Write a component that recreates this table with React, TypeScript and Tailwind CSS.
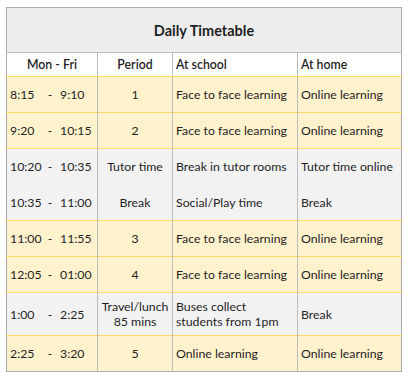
import React from 'react';

type Row = {
  from: string;
  to: string;
  period: React.ReactNode;
  school: React.ReactNode;
  home: string;
  tone: 'yellow' | 'gray';
  h: string;
  noTop?: boolean;
};

const rows: Row[] = [
  { from: '8:15', to: '9:10', period: '1', school: 'Face to face learning', home: 'Online learning', tone: 'yellow', h: 'h-[36px]' },
  { from: '9:20', to: '10:15', period: '2', school: 'Face to face learning', home: 'Online learning', tone: 'yellow', h: 'h-[36px]' },
  { from: '10:20', to: '10:35', period: 'Tutor time', school: 'Break in tutor rooms', home: 'Tutor time online', tone: 'gray', h: 'h-[36px]' },
  { from: '10:35', to: '11:00', period: 'Break', school: 'Social/Play time', home: 'Break', tone: 'gray', h: 'h-[36px]', noTop: true },
  { from: '11:00', to: '11:55', period: '3', school: 'Face to face learning', home: 'Online learning', tone: 'yellow', h: 'h-[36px]' },
  { from: '12:05', to: '01:00', period: '4', school: 'Face to face learning', home: 'Online learning', tone: 'yellow', h: 'h-[36px]' },
  {
    from: '1:00', to: '2:25',
    period: <>Travel/lunch<br />85 mins</>,
    school: <>Buses collect<br />students from 1pm</>,
    home: 'Break', tone: 'gray', h: 'h-[43px]',
  },
  { from: '2:25', to: '3:20', period: '5', school: 'Online learning', home: 'Online learning', tone: 'yellow', h: 'h-[36px]' },
];

export default function App() {
  return (
    <div className="bg-white w-[410px] h-[386px] pt-[7px] pl-[6px] text-[#1f1f1f]" style={{ fontFamily: 'Lato, "Open Sans", sans-serif' }}>
      <table className="border-collapse table-fixed w-[395px] text-[12.3px] leading-[15px] border border-[#ababab]">
        <colgroup>
          <col className="w-[91px]" />
          <col className="w-[75px]" />
          <col className="w-[125px]" />
          <col className="w-[104px]" />
        </colgroup>
        <thead>
          <tr className="h-[45px] bg-[#ededed]">
            <th colSpan={4} className="text-center font-bold text-[14.5px] border-b border-[#bdbdbd] pt-[1px]">Daily Timetable</th>
          </tr>
          <tr className="h-[24px] bg-white">
            <th className="text-center font-semibold border-r border-[#bdbdbd] border-b border-b-[#ffd966]">Mon - Fri</th>
            <th className="text-center font-semibold border-r border-[#bdbdbd] border-b border-b-[#ffd966]">Period</th>
            <th className="text-left font-semibold pl-[3px] border-r border-[#bdbdbd] border-b border-b-[#ffd966]">At school</th>
            <th className="text-left font-semibold pl-[3px] border-b border-b-[#ffd966]">At home</th>
          </tr>
        </thead>
        <tbody>
          {rows.map((r, i) => {
            const bg = r.tone === 'yellow' ? 'bg-[#fff2cc]' : 'bg-[#f2f2f2]';
            const top = r.noTop ? 'border-t-0' : 'border-t border-t-[#ffd966]';
            return (
              <tr key={i} className={`${r.h} ${bg} ${top}`}>
                <td className="pl-[3px] border-r border-[#bdbdbd]">
                  <span className="inline-block w-[36px]">{r.from}</span>
                  <span className="inline-block w-[8px] text-center">-</span>
                  <span className="inline-block pl-[6px]">{r.to}</span>
                </td>
                <td className="text-center border-r border-[#bdbdbd]">{r.period}</td>
                <td className="pl-[3px] border-r border-[#bdbdbd]">{r.school}</td>
                <td className="pl-[3px]">{r.home}</td>
              </tr>
            );
          })}
        </tbody>
      </table>
    </div>
  );
}
